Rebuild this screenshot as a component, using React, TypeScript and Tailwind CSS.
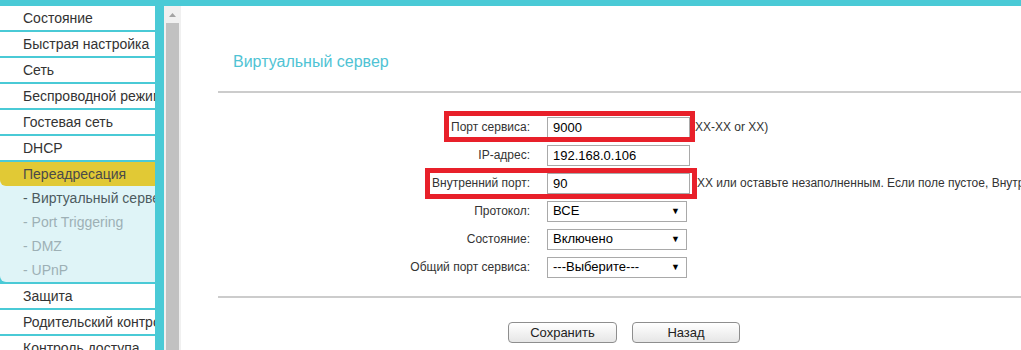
import React from 'react';

const font = { fontFamily: '"Liberation Sans", Arial, sans-serif' };

const topItems = ['Состояние', 'Быстрая настройка', 'Сеть', 'Беспроводной режим', 'Гостевая сеть', 'DHCP'];
const subItems = [
  { name: '- Виртуальный сервер', active: true },
  { name: '- Port Triggering', active: false },
  { name: '- DMZ', active: false },
  { name: '- UPnP', active: false },
];
const bottomItems = ['Защита', 'Родительский контроль', 'Контроль доступа'];

function MenuItem({ name }: { name: string }) {
  return (
    <div className="h-[24px] shrink-0 bg-white pl-[23px] text-[14px] leading-[24px] text-[#333] whitespace-nowrap overflow-hidden">
      {name}
    </div>
  );
}

function Sidebar() {
  return (
    <div className="w-[155px] shrink-0 bg-[#4acad6] flex flex-col gap-[2px] overflow-hidden">
      {topItems.map((n) => (
        <MenuItem key={n} name={n} />
      ))}
      {/* Переадресация group */}
      <div className="shrink-0 bg-[#dff4f7] rounded-bl-[6px] overflow-hidden">
        <div className="h-[24px] bg-[#e1c935] rounded-bl-[6px] pl-[23px] text-[14px] leading-[24px] text-[#4a4a4a] whitespace-nowrap">
          Переадресация
        </div>
        {subItems.map((s) => (
          <div
            key={s.name}
            className={
              'h-[24px] pl-[23px] text-[14px] leading-[24px] whitespace-nowrap overflow-hidden ' +
              (s.active ? 'text-[#4d5b60]' : 'text-[#9db0b5]')
            }
          >
            {s.name}
          </div>
        ))}
      </div>
      {bottomItems.map((n) => (
        <MenuItem key={n} name={n} />
      ))}
    </div>
  );
}

function Scrollbar() {
  return (
    <div className="w-[17px] shrink-0 bg-[#f0f0f0] flex flex-col">
      <div className="h-[17px] flex items-center justify-center">
        <svg width="7" height="4" viewBox="0 0 7 4">
          <path d="M3.5 0 L7 4 L0 4 Z" fill="#a3a3a3" />
        </svg>
      </div>
      <div className="flex-1 mx-[2px] bg-[#c1c1c1]" />
    </div>
  );
}

function TextInput({ value }: { value: string }) {
  return (
    <div className="w-[143px] h-[21px] border border-[#a9a9a9] bg-white pl-[5px] text-[13px] leading-[19px] text-black">
      {value}
    </div>
  );
}

function Select({ value }: { value: string }) {
  return (
    <div className="w-[140px] h-[21px] border border-[#a9a9a9] bg-white pl-[5px] pr-[6px] flex items-center justify-between text-[13px] text-black">
      <span>{value}</span>
      <span className="text-[9px] leading-none">▼</span>
    </div>
  );
}

function Row({ label, children }: { label: string; children: React.ReactNode }) {
  return (
    <div className="relative h-[28px] flex items-center whitespace-nowrap">
      <div className="w-[349px] shrink-0 text-right text-[12px] text-[#333]">{label}</div>
      <div className="ml-[17px] flex items-center">{children}</div>
    </div>
  );
}

export default function App() {
  return (
    <div className="w-[1021px] h-[350px] overflow-hidden bg-white flex flex-col" style={font}>
      <div className="h-[6px] shrink-0 bg-[#4acad6]" />
      <div className="flex flex-1 min-h-0">
        <Sidebar />
        <div className="w-[9px] shrink-0 bg-[#4acad6]" />
        <Scrollbar />

        {/* Content */}
        <div className="flex-1 min-w-0 overflow-hidden flex flex-col">
          <div className="pt-[46px] pl-[52px] text-[16px] leading-[20px] text-[#4fc3d4]">Виртуальный сервер</div>
          <div className="ml-[37px] mt-[19px] h-[2px] bg-[#cccccc]" />

          <div className="mt-[20px] flex flex-col">
            <Row label="Порт сервиса:">
              <TextInput value="9000" />
              <span className="ml-[5px] text-[12px] text-[#333]">XX-XX or XX)</span>
              <div className="absolute left-[263px] top-[-2px] w-[251px] h-[31px] border-[5px] border-[#e8202a]" />
            </Row>
            <Row label="IP-адрес:">
              <TextInput value="192.168.0.106" />
            </Row>
            <Row label="Внутренний порт:">
              <TextInput value="90" />
              <span className="ml-[7px] text-[12px] text-[#333]">
                XX или оставьте незаполненным. Если поле пустое, Внутренний порт будет совпадать с портом сервиса.
              </span>
              <div className="absolute left-[244px] top-[-1px] w-[272px] h-[31px] border-[5px] border-[#e8202a]" />
            </Row>
            <Row label="Протокол:">
              <Select value="ВСЕ" />
            </Row>
            <Row label="Состояние:">
              <Select value="Включено" />
            </Row>
            <Row label="Общий порт сервиса:">
              <Select value="---Выберите---" />
            </Row>
          </div>

          <div className="ml-[37px] mt-[15px] h-[2px] bg-[#cccccc]" />

          <div className="mt-[24px] pl-[327px] flex gap-[15px]">
            <button className="w-[109px] h-[21px] rounded-[4px] border border-[#8e8e8e] bg-gradient-to-b from-white to-[#e6e6e6] text-[13px] text-[#222]">
              Сохранить
            </button>
            <button className="w-[108px] h-[21px] rounded-[4px] border border-[#8e8e8e] bg-gradient-to-b from-white to-[#e6e6e6] text-[13px] text-[#222]">
              Назад
            </button>
          </div>
        </div>
      </div>
    </div>
  );
}
